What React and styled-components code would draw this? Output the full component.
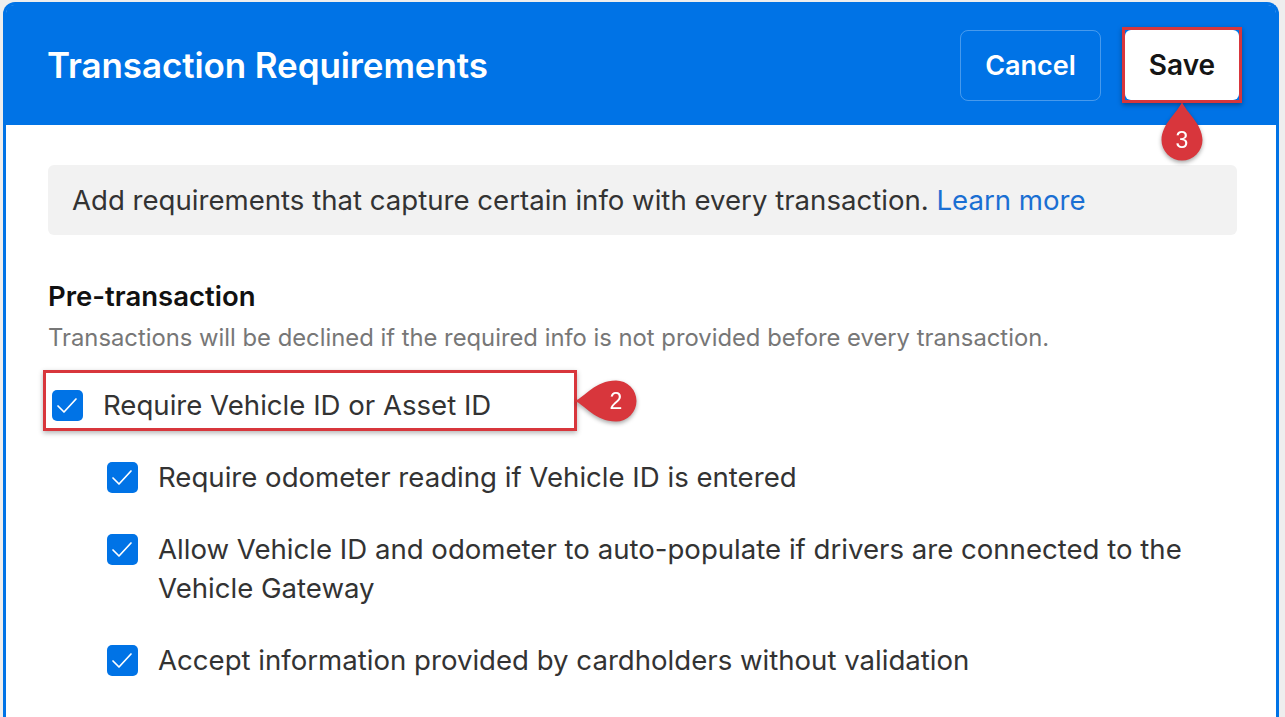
import React from 'react';
import styled, { createGlobalStyle } from 'styled-components';

const BLUE = '#0073e6';
const RED = '#d8363c';

const GlobalStyle = createGlobalStyle`
	body {
		margin: 0;
		background: #eeeeee;
		font-family: Inter, 'Noto Sans', sans-serif;
	}
`;

// Annotation markers (teardrops with a number)
const DropDown = ({ n }) => (
	<MarkerDown>
		<svg width="42" height="60" viewBox="0 0 42 60">
			<path d="M21 0 C25 10, 41.5 22, 41.5 38 A20.5 20.5 0 0 1 0.5 38 C0.5 22, 17 10, 21 0 Z" fill={RED} />
		</svg>
		<MarkerNum $top={38} $left={21}>{n}</MarkerNum>
	</MarkerDown>
);

const DropLeft = ({ n }) => (
	<MarkerLeft>
		<svg width="62" height="42" viewBox="0 0 62 42">
			<path d="M0 21 C10 17, 20 0.5, 41 0.5 A20.5 20.5 0 0 1 41 41.5 C20 41.5, 10 25, 0 21 Z" fill={RED} />
		</svg>
		<MarkerNum $top={21} $left={41}>{n}</MarkerNum>
	</MarkerLeft>
);

const Check = () => (
	<Box>
		<svg width="31" height="31" viewBox="0 0 31 31">
			<polyline points="6,16 12,22 24,9" fill="none" stroke="#fff" strokeWidth="1.7" strokeLinecap="round" strokeLinejoin="round" />
		</svg>
	</Box>
);

const options = [
	'Require odometer reading if Vehicle ID is entered',
	'Allow Vehicle ID and odometer to auto-populate if drivers are connected to the Vehicle Gateway',
	'Accept information provided by cardholders without validation',
];

const App = () => {
	return (
		<>
			<GlobalStyle />
			<Page>
				<Card>
					<Header>
						<Title>Transaction Requirements</Title>
						<Actions>
							<CancelButton>Cancel</CancelButton>
							<Highlight>
								<SaveButton>Save</SaveButton>
								<DropDown n="3" />
							</Highlight>
						</Actions>
					</Header>
					<Body>
						<Notice>
							Add requirements that capture certain info with every transaction. <Link>Learn more</Link>
						</Notice>
						<Section>
							<SectionTitle>Pre-transaction</SectionTitle>
							<SectionHint>Transactions will be declined if the required info is not provided before every transaction.</SectionHint>
						</Section>
						<MainOption>
							<Check />
							<Label>Require Vehicle ID or Asset ID</Label>
							<DropLeft n="2" />
						</MainOption>
						<SubList>
							{options.map((text) => (
								<Option key={text}>
									<Check />
									<Label>{text}</Label>
								</Option>
							))}
						</SubList>
					</Body>
				</Card>
			</Page>
		</>
	);
};

const Page = styled.div`
	height: 100vh;
	box-sizing: border-box;
	padding: 2px 6px 0 3px;
	overflow: hidden;
`;

const Card = styled.div`
	height: 100%;
	box-sizing: border-box;
	border: 3px solid ${BLUE};
	border-bottom: none;
	border-radius: 12px 12px 0 0;
	background: #fff;
`;

const Header = styled.div`
	height: 120px;
	display: flex;
	align-items: center;
	justify-content: space-between;
	padding: 0 34px 0 41px;
	background: ${BLUE};
	border-radius: 8px 8px 0 0;
`;

const Title = styled.h1`
	margin: 0;
	color: #fff;
	font-size: 35px;
	font-weight: 600;
	letter-spacing: -0.1px;
`;

const Actions = styled.div`
	display: flex;
	align-items: center;
	gap: 21px;
`;

const CancelButton = styled.button`
	width: 141px;
	height: 71px;
	border: 1px solid rgba(255, 255, 255, 0.28);
	border-radius: 8px;
	background: transparent;
	color: #fff;
	font-family: inherit;
	font-size: 27px;
	font-weight: 600;
`;

const Highlight = styled.div`
	position: relative;
	display: flex;
	border: 3px solid ${RED};
	box-shadow: 0 2px 5px rgba(0, 0, 0, 0.35);
`;

const SaveButton = styled.button`
	width: 114px;
	height: 70px;
	border: none;
	border-radius: 6px;
	background: #fff;
	color: #151515;
	font-family: inherit;
	font-size: 28px;
	font-weight: 600;
`;

const MarkerDown = styled.div`
	position: absolute;
	top: calc(100% + 2px);
	left: 50%;
	margin-left: -21px;
	width: 42px;
	height: 60px;
	filter: drop-shadow(0 2px 2px rgba(0, 0, 0, 0.35));
	svg {
		display: block;
	}
`;

const MarkerLeft = styled.div`
	position: absolute;
	left: calc(100% + 1px);
	top: 50%;
	margin-top: -21px;
	width: 62px;
	height: 42px;
	filter: drop-shadow(0 2px 2px rgba(0, 0, 0, 0.35));
	svg {
		display: block;
	}
`;

const MarkerNum = styled.span`
	position: absolute;
	top: ${(p) => p.$top}px;
	left: ${(p) => p.$left}px;
	transform: translate(-50%, -50%);
	color: #fff;
	font-family: 'Liberation Sans', Arial, sans-serif;
	font-size: 23px;
	line-height: 1;
`;

const Body = styled.div`
	padding: 40px 39px 0 42px;
`;

const Notice = styled.div`
	height: 70px;
	display: flex;
	align-items: center;
	padding-left: 24px;
	border-radius: 6px;
	background: #f2f2f2;
	color: #333;
	font-size: 27.6px;
	white-space: pre;
`;

const Link = styled.a`
	color: #1a6fd3;
	cursor: pointer;
`;

const Section = styled.div`
	margin-top: 44px;
`;

const SectionTitle = styled.h2`
	margin: 0;
	color: #111;
	font-size: 27.5px;
	font-weight: 600;
	line-height: 34px;
`;

const SectionHint = styled.p`
	margin: 11px 0 0;
	color: #777;
	font-size: 23.8px;
	line-height: 28px;
`;

const MainOption = styled.div`
	position: relative;
	box-sizing: border-box;
	width: 534px;
	height: 61px;
	margin: 18px 0 0 -5px;
	display: flex;
	align-items: center;
	gap: 20px;
	padding: 9px 0 0 6px;
	border: 3px solid ${RED};
	box-shadow: 0 2px 5px rgba(0, 0, 0, 0.3);
`;

const SubList = styled.div`
	display: flex;
	flex-direction: column;
	gap: 33px;
	margin-top: 27px;
	padding-left: 59px;
`;

const Option = styled.div`
	display: flex;
	align-items: flex-start;
	gap: 20px;
`;

const Box = styled.span`
	flex: none;
	width: 31px;
	height: 31px;
	display: flex;
	align-items: center;
	justify-content: center;
	border-radius: 5px;
	background: ${BLUE};
	margin-top: 4px;
	${MainOption} & {
		margin-top: 0;
	}
	svg {
		display: block;
	}
`;

const Label = styled.span`
	color: #333;
	font-size: 27.6px;
	line-height: 39px;
`;

export default App;
